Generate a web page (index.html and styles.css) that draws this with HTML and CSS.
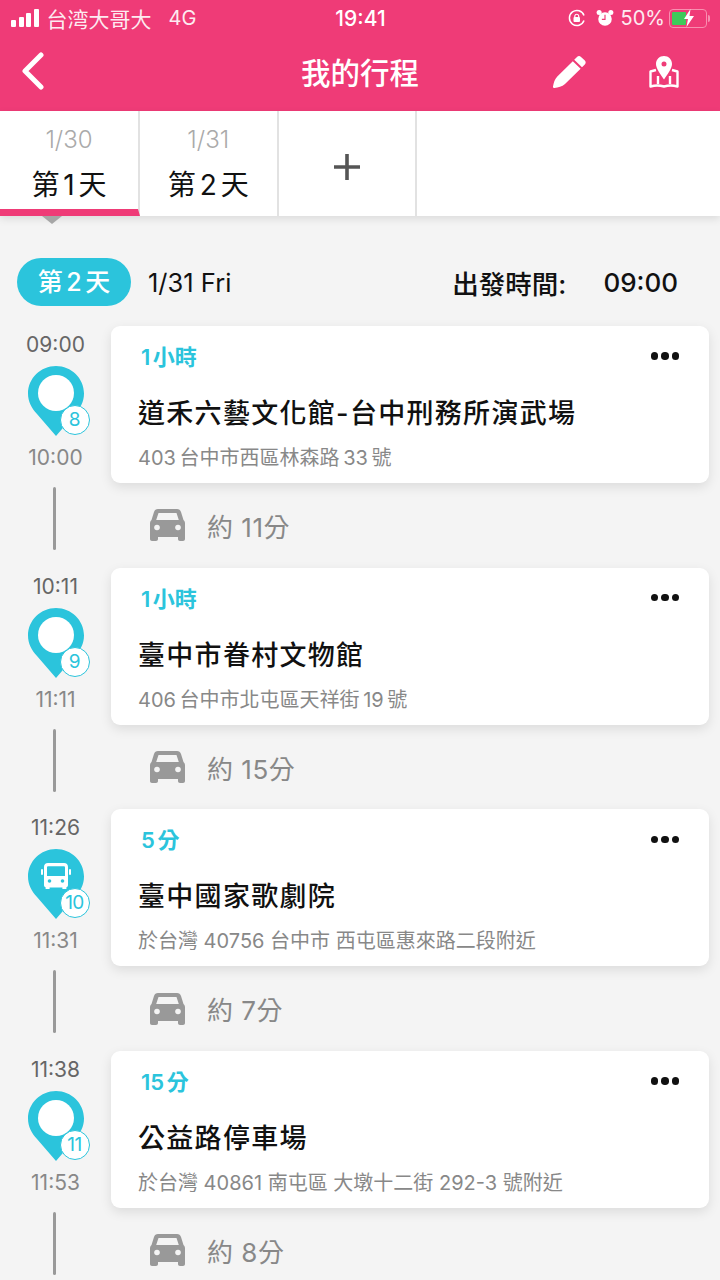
FILE: index.html
```html
<!DOCTYPE html>
<html lang="zh-Hant">
<head>
    <meta charset="UTF-8">
    <meta name="viewport" content="width=device-width, initial-scale=1.0">
    <title>我的行程</title>
    <link rel="stylesheet" href="styles.css">
</head>
<body>
    <svg class="defs" width="0" height="0">
        <symbol id="car" viewBox="0 0 35 32">
            <path fill="#999" d="M8 0h19c2 0 3.400 1 4 3l2.500 8c1 .8 1.500 2 1.500 3.500V30c0 1.200-.8 2-2 2h-3c-1.200 0-2-.8-2-2v-2H8v2c0 1.200-.8 2-2 2H2c-1.200 0-2-.8-2-2V14.500C0 13 .5 11.800 1.500 11L4 3c.6-2 2-3 4-3zm.5 4L6.200 11h22.600L26.500 4h-18z"/>
            <circle cx="7" cy="18.500" r="2.800" fill="#f4f4f4"/>
            <circle cx="28" cy="18.500" r="2.800" fill="#f4f4f4"/>
        </symbol>
        <symbol id="pin" viewBox="0 0 56 70">
            <path fill="#2bc4dc" d="M28 0c15.300 0 28 12.300 28 27.500 0 8-3.500 14.500-9 20.500L28 70 9 48C3.500 42 0 35.500 0 27.500 0 12.300 12.700 0 28 0z"/>
        </symbol>
    </svg>

    <header class="topbar">
        <div class="status">
            <div class="status-left">
                <span class="signal"><i></i><i></i><i></i><i></i></span>
                <span class="carrier">台湾大哥大</span>
                <span class="net">4G</span>
            </div>
            <div class="clock">19:41</div>
            <div class="status-right">
                <svg width="20" height="20" viewBox="0 0 20 20" fill="none" stroke="#fff" stroke-width="1.500">
                    <path d="M17 7.500A7.500 7.500 0 1 0 17 12.500"/>
                    <rect x="6.500" y="9" width="6.500" height="5" rx="1" fill="#fff" stroke="none"/>
                    <path d="M7.800 9V7.800a2 2 0 0 1 3.900 0V9" stroke-width="1.200"/>
                </svg>
                <svg class="alarm" width="18" height="20" viewBox="0 0 20 20">
                    <circle cx="10" cy="11" r="7.500" fill="#fff"/>
                    <circle cx="3.500" cy="4" r="2.800" fill="#fff"/>
                    <circle cx="16.500" cy="4" r="2.800" fill="#fff"/>
                    <path d="M10 6.500V11.500H6.500" fill="none" stroke="#ef3b77" stroke-width="1.300"/>
                </svg>
                <span class="battery-pct">50%</span>
                <span class="battery"><span class="battery-fill"></span>
                    <svg class="bolt" width="12" height="18" viewBox="0 0 12 18"><path fill="#fff" d="M7.500 0L1 10h4l-1.500 8L11 7H6.500z"/></svg>
                </span>
                <span class="battery-tip"></span>
            </div>
        </div>
        <nav class="navbar">
            <svg class="back" width="26" height="38" viewBox="0 0 26 38" fill="none" stroke="#fff" stroke-width="5" stroke-linecap="round" stroke-linejoin="round"><path d="M21 3L5 19l16 16"/></svg>
            <h1 class="title">我的行程</h1>
            <svg class="pencil" width="33" height="32" viewBox="0 0 33 32"><path fill="#fff" d="M24 1c1.300-1.200 2.800-1.200 4 0l3.600 3.300c1.400 1.300 1.400 3 .2 4.300L29 11.300 21.200 3.800zM19.800 5.300l7.800 7.500L12 28c-3 2.600-6.800 3.600-10.500 4C.4 32.100-.2 31.500 0 30.500c.7-3.800 1.700-7.300 4.300-10z"/></svg>
            <svg class="map" width="30" height="32" viewBox="0 0 30 32" fill="none" stroke="#fff">
                <path fill="#fff" stroke="none" fill-rule="evenodd" d="M15 0c4.500 0 8 3.500 8 8 0 4.300-4.500 10.500-8 15.500C11.500 18.500 7 12.300 7 8c0-4.500 3.500-8 8-8zm0 5.500a2.500 2.500 0 1 0 0 5 2.500 2.500 0 0 0 0-5z"/>
                <path stroke-width="2.400" stroke-linejoin="round" d="M7 14L1.500 15.500V30.500c4.500-1.400 9-1.400 13.500 0 4.500-1.400 9-1.400 13.500 0V15.500L23 14"/>
                <path stroke-width="2.400" d="M9 20v8M21 20v8"/>
            </svg>
        </nav>
    </header>

    <div class="tabs">
        <div class="tab tab-active">
            <span class="tab-date">1/30</span>
            <span class="tab-day">第 1 天</span>
        </div>
        <div class="tab">
            <span class="tab-date">1/31</span>
            <span class="tab-day">第 2 天</span>
        </div>
        <div class="tab tab-add">
            <svg width="26" height="26" viewBox="0 0 26 26"><path fill="#555" d="M11.200 0h3.600v11.200H26v3.600H14.800V26h-3.600V14.800H0v-3.600h11.200z"/></svg>
        </div>
        <div class="tab-rest"></div>
    </div>
    <div class="tab-arrow"></div>

    <div class="dayinfo">
        <span class="pill">第 2 天</span>
        <span class="dayinfo-date">1/31 Fri</span>
        <span class="start-label">出發時間:</span>
        <span class="start-time">09:00</span>
    </div>

    <main class="schedule">
        <section class="stop">
            <div class="stop-side">
                <span class="time time-in">09:00</span>
                <div class="pin">
                    <svg class="pin-shape"><use href="#pin"/></svg>
                    <span class="pin-hole"></span>
                    <span class="pin-num">8</span>
                </div>
                <span class="time">10:00</span>
            </div>
            <div class="card">
                <div class="card-top"><span class="dur">1 小時</span><span class="dots"><i></i><i></i><i></i></span></div>
                <div class="card-name">道禾六藝文化館-台中刑務所演武場</div>
                <div class="card-addr addr-tight">403 台中市西區林森路 33 號</div>
            </div>
        </section>
        <div class="leg">
            <span class="leg-line"></span>
            <svg class="car"><use href="#car"/></svg>
            <span class="leg-text">約 11分</span>
        </div>

        <section class="stop">
            <div class="stop-side">
                <span class="time time-in">10:11</span>
                <div class="pin">
                    <svg class="pin-shape"><use href="#pin"/></svg>
                    <span class="pin-hole"></span>
                    <span class="pin-num">9</span>
                </div>
                <span class="time">11:11</span>
            </div>
            <div class="card">
                <div class="card-top"><span class="dur">1 小時</span><span class="dots"><i></i><i></i><i></i></span></div>
                <div class="card-name">臺中市眷村文物館</div>
                <div class="card-addr addr-tight">406 台中市北屯區天祥街 19 號</div>
            </div>
        </section>
        <div class="leg">
            <span class="leg-line"></span>
            <svg class="car"><use href="#car"/></svg>
            <span class="leg-text">約 15分</span>
        </div>

        <section class="stop">
            <div class="stop-side">
                <span class="time time-in">11:26</span>
                <div class="pin">
                    <svg class="pin-shape"><use href="#pin"/></svg>
                    <svg class="pin-bus" width="30" height="26" viewBox="0 0 30 26">
                        <path fill="#fff" fill-rule="evenodd" d="M7 0h16c2.500 0 4 1.500 4 4v18c0 1.200-.6 2-1.600 2.300V26h-4v-1.500H8.600V26h-4v-1.700C3.600 24 3 23.200 3 22V4c0-2.500 1.500-4 4-4zm-1 4.500V13h18V4.500c0-.8-.5-1.300-1.300-1.300H7.300C6.500 3.200 6 3.700 6 4.500z"/>
                        <rect x="0" y="6" width="2" height="6" rx="1" fill="#fff"/>
                        <rect x="28" y="6" width="2" height="6" rx="1" fill="#fff"/>
                        <circle cx="8.500" cy="18" r="1.800" fill="#2bc4dc"/>
                        <circle cx="21.500" cy="18" r="1.800" fill="#2bc4dc"/>
                    </svg>
                    <span class="pin-num">10</span>
                </div>
                <span class="time">11:31</span>
            </div>
            <div class="card">
                <div class="card-top"><span class="dur">5 分</span><span class="dots"><i></i><i></i><i></i></span></div>
                <div class="card-name">臺中國家歌劇院</div>
                <div class="card-addr">於台灣 40756 台中市 西屯區惠來路二段附近</div>
            </div>
        </section>
        <div class="leg">
            <span class="leg-line"></span>
            <svg class="car"><use href="#car"/></svg>
            <span class="leg-text">約 7分</span>
        </div>

        <section class="stop">
            <div class="stop-side">
                <span class="time time-in">11:38</span>
                <div class="pin">
                    <svg class="pin-shape"><use href="#pin"/></svg>
                    <span class="pin-hole"></span>
                    <span class="pin-num">11</span>
                </div>
                <span class="time">11:53</span>
            </div>
            <div class="card">
                <div class="card-top"><span class="dur">15 分</span><span class="dots"><i></i><i></i><i></i></span></div>
                <div class="card-name">公益路停車場</div>
                <div class="card-addr">於台灣 40861 南屯區 大墩十二街 292-3 號附近</div>
            </div>
        </section>
        <div class="leg">
            <span class="leg-line"></span>
            <svg class="car"><use href="#car"/></svg>
            <span class="leg-text">約 8分</span>
        </div>
    </main>
</body>
</html>
```

FILE: styles.css
```css
* {
    box-sizing: border-box;
}
html, body {
    margin: 0;
    height: 1280px;
    overflow: hidden;
}
body {
    background: #f4f4f4;
    font-family: Inter, "Noto Sans CJK TC", sans-serif;
    color: #111;
}
.defs {
    display: block;
    height: 0;
}

/* pink top area */
.topbar {
    background: #ef3b77;
    height: 111px;
    color: #fff;
}
.status {
    height: 36px;
    display: grid;
    grid-template-columns: 1fr auto 1fr;
    align-items: center;
    padding: 0 10px 0 11px;
    font-size: 19px;
}
.status-left, .status-right {
    display: flex;
    align-items: center;
}
.status-right {
    justify-content: flex-end;
    gap: 7px;
}
.signal {
    display: flex;
    align-items: flex-end;
    gap: 2.500px;
    height: 18px;
    margin-right: 8px;
}
.signal i {
    display: block;
    width: 5px;
    background: #fff;
    border-radius: 1px;
}
.signal i:nth-child(1) { height: 7px; }
.signal i:nth-child(2) { height: 10px; }
.signal i:nth-child(3) { height: 14px; }
.signal i:nth-child(4) { height: 18px; }
.carrier {
    font-size: 21px;
    opacity: 0.9;
}
.net {
    margin-left: 17px;
    font-size: 20px;
    opacity: 0.9;
}
.clock {
    font-size: 21px;
    font-weight: 500;
}
.alarm {
    margin-left: 2px;
}
.battery-pct {
    font-size: 20px;
    opacity: 0.9;
}
.battery {
    position: relative;
    width: 38px;
    height: 19px;
    margin-left: -3px;
    border: 1.500px solid #f88fb0;
    border-radius: 4px;
    padding: 2px;
}
.battery-fill {
    display: block;
    width: 14px;
    height: 100%;
    background: #3ec95a;
    border-radius: 1px;
}
.bolt {
    position: absolute;
    left: 13px;
    top: -1px;
}
.battery-tip {
    width: 2px;
    height: 7px;
    margin-left: -6px;
    background: #f88fb0;
    border-radius: 0 2px 2px 0;
}
.navbar {
    position: relative;
    height: 75px;
    display: flex;
    align-items: center;
    padding: 0 41px 4px 20px;
}
.title {
    position: absolute;
    left: 0;
    right: 0;
    top: 16px;
    margin: 0;
    text-align: center;
    font-size: 29.500px;
    line-height: 42px;
    font-weight: 500;
    color: #fff;
}
.back {
    flex: none;
    margin-bottom: 2px;
}
.pencil {
    margin-left: auto;
    margin-right: 63px;
}

/* day tabs */
.tabs {
    display: flex;
    height: 105px;
    background: #fff;
    box-shadow: 0 3px 8px rgba(0, 0, 0, 0.1);
    position: relative;
}
.tab {
    width: 138.500px;
    border-right: 2px solid #e2e2e2;
    display: flex;
    flex-direction: column;
    align-items: center;
    padding-top: 12px;
}
.tab-active {
    width: 140px;
    border-bottom: 7px solid #ef3b77;
}
.tab-add {
    justify-content: center;
    padding: 6px 0 0;
}
.tab-rest {
    flex: 1;
}
.tab-date {
    font-size: 24px;
    line-height: 34px;
    color: #aaa;
    font-weight: 300;
}
.tab-day {
    font-size: 28px;
    line-height: 40px;
    margin-top: 8px;
    color: #111;
    word-spacing: -4px;
}
.tab-arrow {
    width: 0;
    height: 0;
    margin-left: 42px;
    border-left: 10px solid transparent;
    border-right: 10px solid transparent;
    border-top: 8px solid #a6a6a6;
    position: relative;
}

/* day summary */
.dayinfo {
    display: flex;
    align-items: center;
    height: 48px;
    margin-top: 34px;
    padding: 0 42px 0 17px;
}
.pill {
    width: 114px;
    height: 48px;
    border-radius: 24px;
    background: #2bc4dc;
    color: #fff;
    font-size: 25px;
    font-weight: 500;
    line-height: 48px;
    text-align: center;
    word-spacing: -3px;
}
.dayinfo-date {
    margin-left: 17px;
    font-size: 25.500px;
}
.start-label {
    margin-left: auto;
    font-size: 26.500px;
    font-weight: 500;
}
.start-time {
    margin-left: 37px;
    font-size: 26px;
    font-weight: 500;
}

/* stops */
.schedule {
    margin-top: 20px;
}
.stop {
    display: flex;
    height: 157px;
    padding-right: 11px;
}
.stop-side {
    width: 111px;
    flex: none;
    display: flex;
    flex-direction: column;
    align-items: center;
}
.time {
    font-size: 21px;
    line-height: 26px;
    color: #888;
}
.time-in {
    color: #666;
    margin-top: 6px;
}
.pin {
    position: relative;
    width: 56px;
    height: 70px;
    margin: 8px 0 9px;
}
.pin-shape {
    display: block;
    width: 56px;
    height: 70px;
}
.pin-hole {
    position: absolute;
    left: 10px;
    top: 9px;
    width: 36px;
    height: 36px;
    border-radius: 50%;
    background: #fff;
}
.pin-bus {
    position: absolute;
    left: 13px;
    top: 14px;
}
.pin-num {
    position: absolute;
    left: 32px;
    top: 39px;
    width: 30px;
    height: 30px;
    border-radius: 50%;
    border: 1.500px solid #2bc4dc;
    background: #fff;
    color: #2bc4dc;
    font-size: 19px;
    line-height: 27px;
    text-align: center;
    letter-spacing: -0.5px;
}
.card {
    flex: 1;
    background: #fff;
    border-radius: 9px;
    box-shadow: 0 4px 12px rgba(0, 0, 0, 0.1);
    padding: 15px 30px 0 27px;
}
.card-top {
    display: flex;
    justify-content: space-between;
    align-items: center;
    height: 30px;
    color: #2bc4dc;
    font-size: 22px;
    font-weight: 600;
}
.dur {
    margin-left: 3px;
    padding-bottom: 2px;
    word-spacing: -3px;
}
.dots {
    display: flex;
    gap: 3px;
}
.dots i {
    display: block;
    width: 7.500px;
    height: 7.500px;
    background: #111;
    border-radius: 50%;
}
.card-name {
    margin-top: 19px;
    font-size: 27px;
    line-height: 48px;
    font-weight: 500;
    color: #111;
    letter-spacing: 1.300px;
}
.card-addr {
    margin-top: 5px;
    font-size: 20px;
    line-height: 30px;
    color: #888;
}
.addr-tight {
    word-spacing: -2px;
}

/* travel between stops */
.leg {
    display: flex;
    align-items: center;
    height: 84.700px;
}
.leg-line {
    align-self: flex-start;
    width: 3px;
    height: 63px;
    margin: 4px 0 0 53px;
    background: #999;
    border-radius: 2px;
}
.car {
    width: 35px;
    height: 32px;
    margin-left: 94px;
}
.leg-text {
    margin-left: 22px;
    font-size: 26px;
    color: #888;
    letter-spacing: 0.500px;
}
```
